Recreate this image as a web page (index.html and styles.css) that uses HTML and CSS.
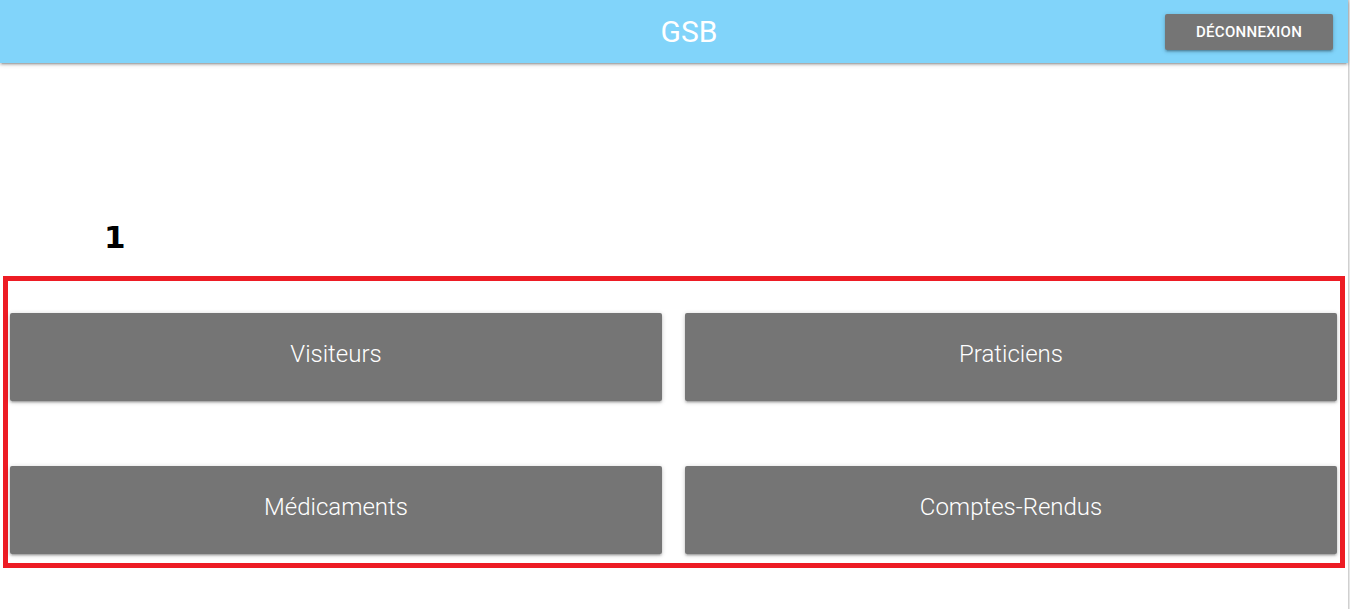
FILE: index.html
```html
<!DOCTYPE html>
<html lang="fr">
<head>
<meta charset="utf-8">
<title>GSB</title>
<link rel="stylesheet" href="styles.css">
</head>
<body>
<div class="page">
  <div class="main">
    <header class="nav">
      <div class="nav-side"></div>
      <div class="brand">GSB</div>
      <div class="nav-side nav-right">
        <button class="btn-logout">Déconnexion</button>
      </div>
    </header>
    <div class="content">
      <div class="label">1</div>
      <section class="frame">
        <div class="grid">
          <button class="tile">Visiteurs</button>
          <button class="tile">Praticiens</button>
          <button class="tile">Médicaments</button>
          <button class="tile">Comptes-Rendus</button>
        </div>
      </section>
    </div>
  </div>
  <div class="edge"></div>
</div>
</body>
</html>
```
FILE: styles.css
```css
* { box-sizing: border-box; }
html, body { margin: 0; padding: 0; background: #fff; }
body { font-family: Roboto, "Noto Sans", sans-serif; height: 609px; overflow: hidden; }

.page { display: flex; height: 609px; }
.main { flex: 1; min-width: 0; }
.edge { width: 2px; background: #e6e6e6; border-left: 1px solid #d0d0d0; }

.nav {
  display: grid;
  grid-template-columns: 1fr auto 1fr;
  align-items: center;
  height: 63px;
  background: #81d4fa;
  box-shadow: 0 2px 2px 0 rgba(0,0,0,.14), 0 3px 1px -2px rgba(0,0,0,.12), 0 1px 5px 0 rgba(0,0,0,.2);
  position: relative;
  z-index: 1;
}
.brand {
  color: #fff;
  font-size: 30px;
  line-height: 63px;
  margin-left: 30px;
}
.nav-right { display: flex; justify-content: flex-end; padding-right: 15px; }
.btn-logout {
  height: 36px;
  width: 168px;
  margin-top: 1px;
  padding: 0;
  border: none;
  border-radius: 2px;
  background: #757575;
  color: #fff;
  font-family: Roboto, sans-serif;
  font-size: 15px;
  font-weight: 500;
  letter-spacing: .3px;
  text-transform: uppercase;
  box-shadow: 0 2px 2px 0 rgba(0,0,0,.14), 0 3px 1px -2px rgba(0,0,0,.12), 0 1px 5px 0 rgba(0,0,0,.2);
}

.content { padding-top: 158px; }
.label {
  font-family: "DejaVu Sans", sans-serif;
  font-weight: bold;
  font-size: 31px;
  line-height: 32px;
  padding-left: 104px;
  color: #000;
}
.frame {
  margin: 23px 3px 0;
  border: 5px solid #ed1c24;
  padding: 32px 3px 9px 2px;
}
.grid {
  display: grid;
  grid-template-columns: 1fr 1fr;
  column-gap: 23px;
  row-gap: 65px;
}
.tile {
  height: 88px;
  border: none;
  border-radius: 2px;
  background: #757575;
  color: #fff;
  font-family: Roboto, sans-serif;
  font-size: 24px;
  font-weight: 300;
  padding: 0 0 6px;
  box-shadow: 0 2px 2px 0 rgba(0,0,0,.14), 0 3px 1px -2px rgba(0,0,0,.12), 0 1px 5px 0 rgba(0,0,0,.2);
}
```
